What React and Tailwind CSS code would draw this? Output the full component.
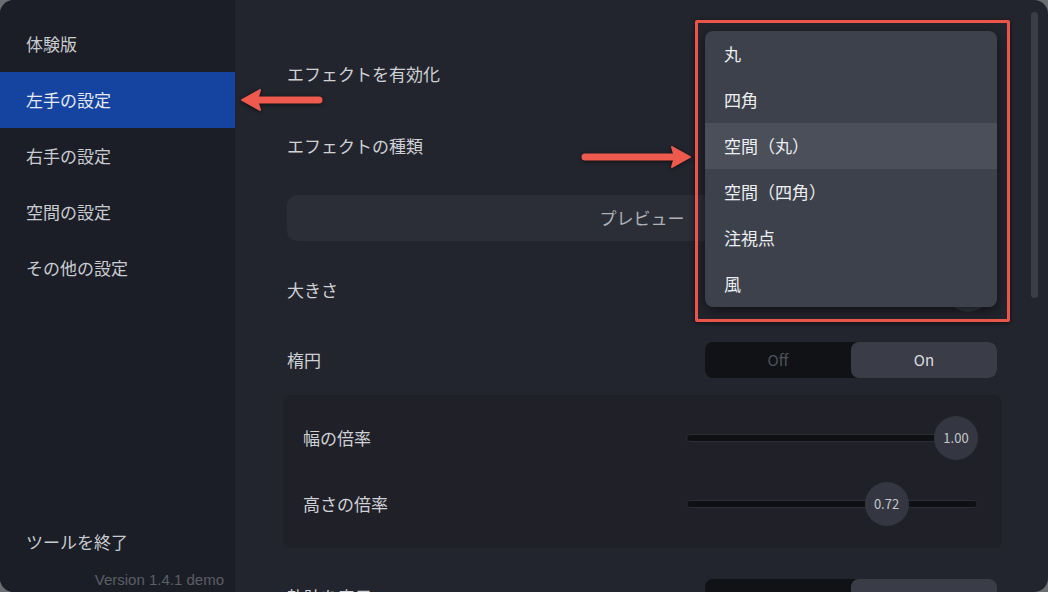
import React from "react";

const font = { fontFamily: '"Noto Sans CJK JP", "Noto Sans", sans-serif' };

const navItems = ["体験版", "左手の設定", "右手の設定", "空間の設定", "その他の設定"];
const shapes = ["丸", "四角", "空間（丸）", "空間（四角）", "注視点", "風"];

function Toggle({ on = true, labels = true }) {
    return (
        <div className="flex h-[36px] w-[292px] overflow-hidden rounded-[8px] bg-[#111216] text-[15px]">
            <div className={`flex flex-1 items-center justify-center ${on ? "text-[#4f525a]" : "bg-[#3a3d47] text-[#dcdde0]"}`}>{labels && "Off"}</div>
            <div className={`flex flex-1 items-center justify-center rounded-[8px] ${on ? "bg-[#3a3d47] text-[#dcdde0]" : "text-[#4f525a]"}`}>{labels && "On"}</div>
        </div>
    );
}

function Slider({ value, label }) {
    // knob centre runs from 22px to 270px along a 292px track
    const left = 22 + value * 248;
    return (
        <div className="relative h-[44px] w-[292px]">
            <div className="absolute left-0 right-0 top-[18px] h-[8px] rounded-full border border-[#2c2e36] bg-[#0f1014]" />
            <div
                className="absolute top-0 flex h-[44px] w-[44px] -translate-x-1/2 items-center justify-center rounded-full bg-[#343741] text-[13px] text-[#c4c6cb]"
                style={{ left }}
            >
                {label}
            </div>
        </div>
    );
}

function Row({ label, children, className = "h-[72px]" }) {
    return (
        <div className={`flex items-center justify-between ${className}`}>
            <span className="text-[17px] text-[#cfd1d5]">{label}</span>
            {children}
        </div>
    );
}

function Arrow({ dir, length }) {
    const left = dir === "left";
    const w = length + 4;
    return (
        <svg width={w} height="28" viewBox={`0 0 ${w} 28`} className="drop-shadow-[0_1px_2px_rgba(0,0,0,0.6)]">
            {left ? (
                <>
                    <path d={`M14 14 H${w - 5}`} stroke="#ee5a4d" strokeWidth="7" strokeLinecap="round" />
                    <path d="M2 14 L20 4 L17 14 L20 24 Z" fill="#ee5a4d" stroke="#ee5a4d" strokeWidth="2" strokeLinejoin="round" />
                </>
            ) : (
                <>
                    <path d={`M5 14 H${w - 14}`} stroke="#ee5a4d" strokeWidth="7" strokeLinecap="round" />
                    <path d={`M${w - 2} 14 L${w - 20} 4 L${w - 17} 14 L${w - 20} 24 Z`} fill="#ee5a4d" stroke="#ee5a4d" strokeWidth="2" strokeLinejoin="round" />
                </>
            )}
        </svg>
    );
}

export default function App() {
    return (
        <div className="h-[592px] w-[1048px] bg-[#6b6d72]" style={font}>
            <div className="relative flex h-full w-full overflow-hidden rounded-[14px] bg-[#23252e]">
                {/* Sidebar */}
                <aside className="flex w-[235px] shrink-0 flex-col bg-[#1b1e26] pt-[16px]">
                    {navItems.map((item, i) => (
                        <div
                            key={item}
                            className={`flex h-[56px] items-center pl-[26px] text-[17px] ${i === 1 ? "bg-[#1543a0] text-[#e6e9f0]" : "text-[#c9ccd1]"}`}
                        >
                            {item}
                        </div>
                    ))}
                    <div className="mt-auto flex h-[56px] items-center pl-[26px] text-[17px] text-[#c9ccd1]">ツールを終了</div>
                    <div
                        className="pb-[2px] pr-[11px] text-right text-[15px] leading-[20px] text-[#5c5f66]"
                        style={{ fontFamily: '"Liberation Sans", Arial, sans-serif' }}
                    >
                        Version 1.4.1 demo
                    </div>
                </aside>

                {/* Main settings */}
                <main className="relative flex-1 overflow-hidden">
                    <div className="w-[762px] pl-[52px] pt-[38px]">
                        <Row label="エフェクトを有効化">
                            <Toggle labels={false} />
                        </Row>
                        <Row label="エフェクトの種類">
                            <div className="h-[36px] w-[292px] rounded-[8px] bg-[#2c2f38]" />
                        </Row>
                        <button className="mt-[13px] flex h-[46px] w-full items-center justify-center rounded-[10px] bg-[#2b2e37] text-[17px] text-[#aeb1b7]">
                            プレビュー
                        </button>
                        <Row label="大きさ" className="mt-[13px] h-[72px]">
                            <Slider value={0.97} label="" />
                        </Row>
                        <Row label="楕円" className="h-[68px]">
                            <Toggle />
                        </Row>
                        <div className="-ml-[4px] -mr-[5px] mt-[1px] rounded-[8px] bg-[#1f2028] px-[20px] pb-[11px] pt-[10px]">
                            <div className="flex h-[66px] items-center justify-between pr-[4px]">
                                <span className="text-[17px] text-[#cfd1d5]">幅の倍率</span>
                                <Slider value={1} label="1.00" />
                            </div>
                            <div className="flex h-[66px] items-center justify-between pr-[4px]">
                                <span className="text-[17px] text-[#cfd1d5]">高さの倍率</span>
                                <Slider value={0.72} label="0.72" />
                            </div>
                        </div>
                        <div className="mt-[31px] flex items-start justify-between">
                            <span className="mt-[6px] text-[17px] leading-[24px] text-[#cfd1d5]">軌跡を表示</span>
                            <div className="h-[36px] w-[292px] rounded-[8px] bg-[#111216]">
                                <div className="ml-auto h-full w-1/2 rounded-[8px] bg-[#3a3d47]" />
                            </div>
                        </div>
                    </div>

                    {/* scrollbar */}
                    <div className="absolute right-[10px] top-[12px] h-[286px] w-[7px] rounded-full bg-[#3a3d46]" />

                    {/* open dropdown */}
                    <div className="absolute left-[470px] top-[31px] w-[292px] overflow-hidden rounded-[8px] bg-[#3d414c] shadow-[0_4px_14px_rgba(0,0,0,0.55)]">
                        {shapes.map((s, i) => (
                            <div
                                key={s}
                                className={`flex h-[46px] items-center pl-[19px] text-[17px] text-[#eceef1] ${i === 2 ? "bg-[#4a4f5a]" : ""}`}
                            >
                                {s}
                            </div>
                        ))}
                    </div>

                    {/* annotation box and arrows */}
                    <div className="absolute left-[460px] top-[20px] h-[302px] w-[315px] rounded-[2px] border-[3px] border-[#ea5449] shadow-[0_1px_4px_rgba(0,0,0,0.6)]" />
                    <div className="absolute left-[5px] top-[86px]">
                        <Arrow dir="left" length={80} />
                    </div>
                    <div className="absolute left-[345px] top-[143px]">
                        <Arrow dir="right" length={108} />
                    </div>
                </main>
            </div>
        </div>
    );
}
